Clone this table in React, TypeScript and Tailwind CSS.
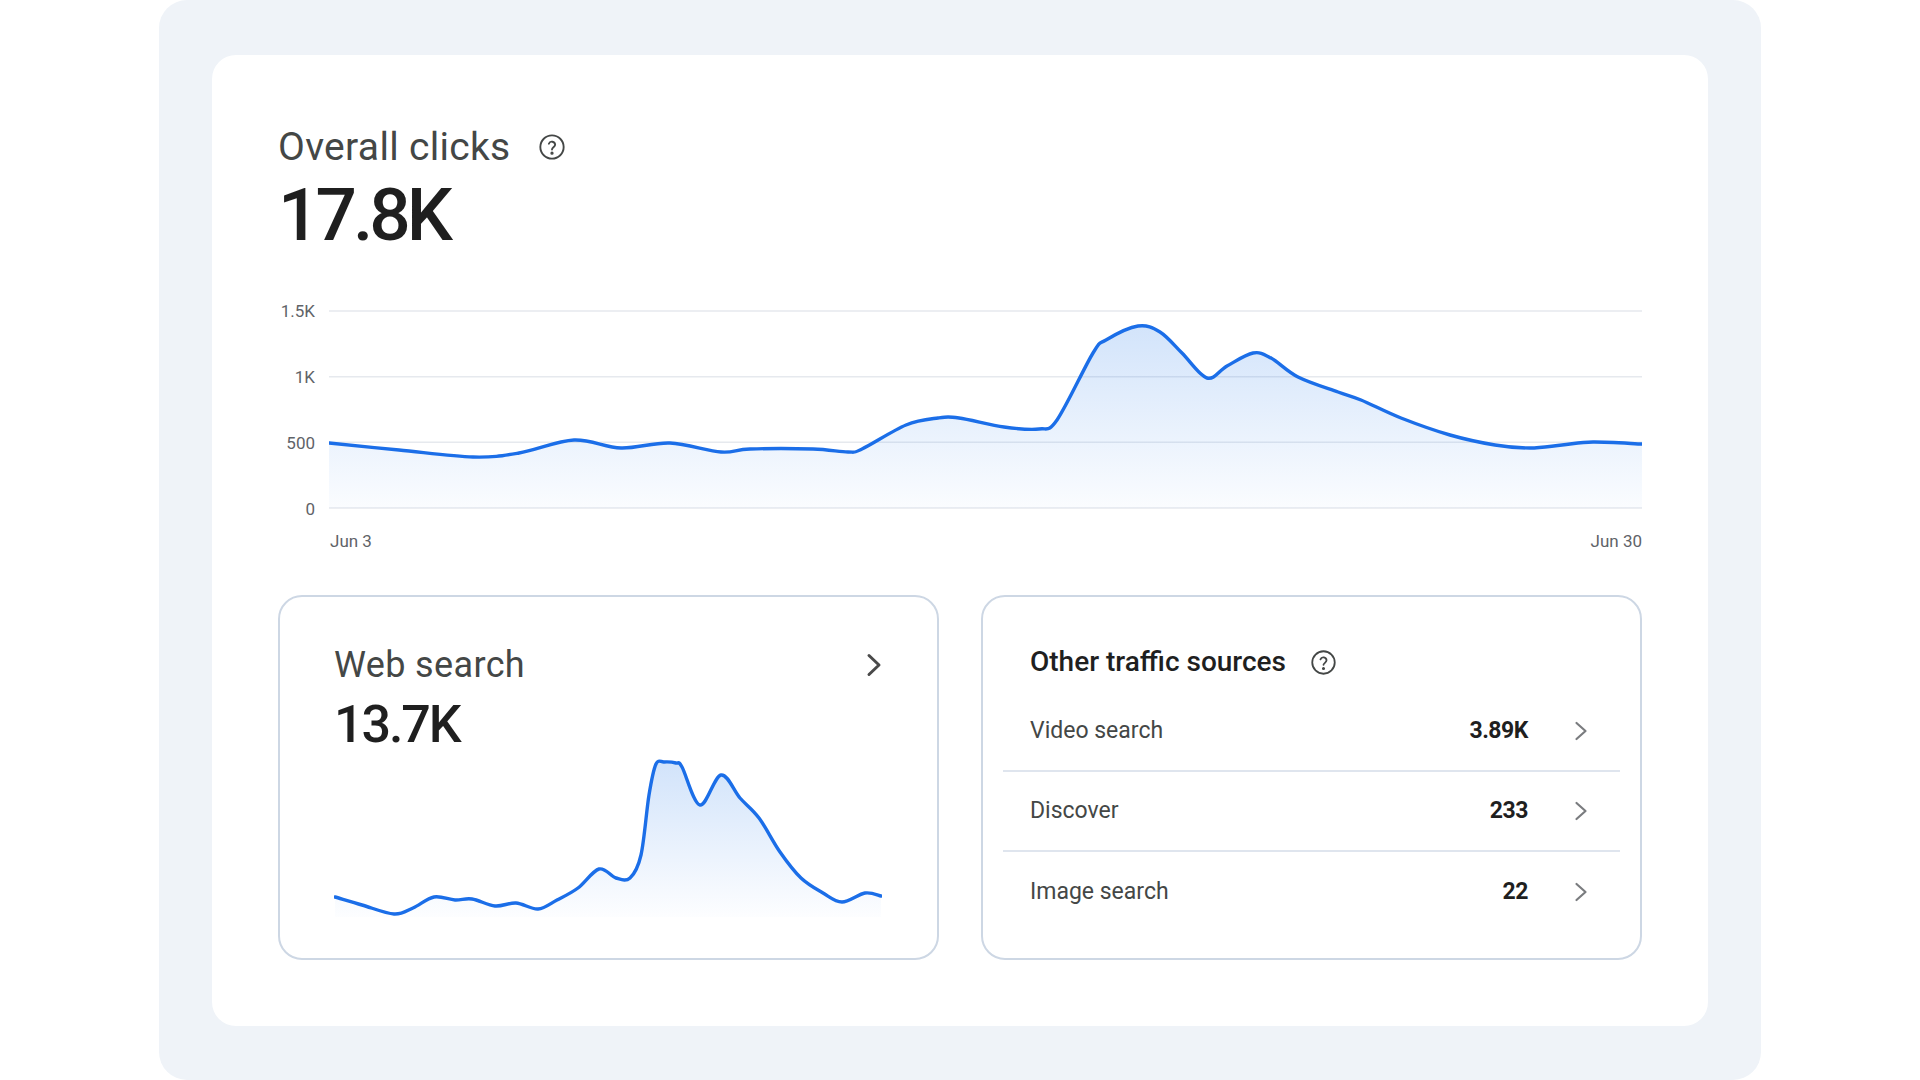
import React from "react";

type Pt = [number, number];

function smoothPath(pts: Pt[]): string {
  let d = `M${pts[0][0]},${pts[0][1]}`;
  for (let i = 0; i < pts.length - 1; i++) {
    const p0 = pts[i - 1] || pts[i];
    const p1 = pts[i];
    const p2 = pts[i + 1];
    const p3 = pts[i + 2] || p2;
    const c1x = p1[0] + (p2[0] - p0[0]) / 6;
    const c1y = p1[1] + (p2[1] - p0[1]) / 6;
    const c2x = p2[0] - (p3[0] - p1[0]) / 6;
    const c2y = p2[1] - (p3[1] - p1[1]) / 6;
    d += ` C${c1x.toFixed(1)},${c1y.toFixed(1)} ${c2x.toFixed(1)},${c2y.toFixed(1)} ${p2[0]},${p2[1]}`;
  }
  return d;
}

const mainRaw: Pt[] = [
  [330, 443], [400, 450], [474, 457], [520, 453], [575, 440], [622, 448], [671, 443],
  [722, 452], [751, 449], [814, 449], [849, 452], [863, 449], [907, 425], [939, 418],
  [960, 418], [1005, 427], [1040, 429], [1058, 420], [1094, 353], [1107, 340],
  [1139, 326], [1161, 332], [1183, 353], [1208, 378], [1228, 366], [1254, 353],
  [1272, 358], [1299, 377], [1339, 392], [1362, 400], [1402, 418], [1451, 435],
  [1496, 445], [1531, 448], [1563, 445], [1594, 442], [1643, 444],
];
const mainPts: Pt[] = mainRaw.map(([x, y]) => [x - 330, y - 300]);

const sparkPts: Pt[] = [
  [1, 142], [28, 150], [60, 159], [79, 153], [100, 142], [121, 145], [138, 144],
  [161, 151], [182, 148], [204, 154], [223, 145], [244, 133], [265, 114], [282, 123],
  [296, 123], [307, 100], [315, 40], [322, 9], [330, 7], [342, 8], [348, 12], [366, 50], [387, 20],
  [406, 43], [425, 63], [446, 97], [467, 123], [489, 138], [508, 147], [531, 138],
  [547, 141],
];

function HelpIcon({ size }: { size: number }) {
  return (
    <svg width={size} height={size} viewBox="0 0 24 24" fill="none" stroke="#444746" strokeWidth={1.6} strokeLinecap="round" strokeLinejoin="round">
      <circle cx="12" cy="12" r="10" />
      <path d="M9.3 9.2a2.8 2.8 0 0 1 5.4 0.9c0 1.9-2.7 2.4-2.7 4" />
      <circle cx="12" cy="17.3" r="0.6" fill="#444746" />
    </svg>
  );
}

function MainChart() {
  const w = 1313;
  const h = 220;
  const line = smoothPath(mainPts);
  const area = `${line} L${w},208 L0,208 Z`;
  const grid = [11, 76.7, 142.3, 208];
  return (
    <svg width={w} height={h} viewBox={`0 0 ${w} ${h}`} className="block">
      <defs>
        <linearGradient id="mainFill" x1="0" y1="20" x2="0" y2="208" gradientUnits="userSpaceOnUse">
          <stop offset="0" stopColor="#1a73e8" stopOpacity="0.2" />
          <stop offset="1" stopColor="#1a73e8" stopOpacity="0.02" />
        </linearGradient>
      </defs>
      {grid.map((y) => (
        <line key={y} x1="0" x2={w} y1={y} y2={y} stroke="#e6e9ee" strokeWidth="1.6" />
      ))}
      <path d={area} fill="url(#mainFill)" />
      <path d={line} fill="none" stroke="#1b6ee8" strokeWidth="3.4" strokeLinecap="round" strokeLinejoin="round" />
    </svg>
  );
}

function Sparkline() {
  const w = 548;
  const h = 165;
  const line = smoothPath(sparkPts);
  const area = `${line} L547,162 L1,162 Z`;
  return (
    <svg width={w} height={h} viewBox={`0 0 ${w} ${h}`} className="block">
      <defs>
        <linearGradient id="sparkFill" x1="0" y1="5" x2="0" y2="162" gradientUnits="userSpaceOnUse">
          <stop offset="0" stopColor="#1a73e8" stopOpacity="0.2" />
          <stop offset="1" stopColor="#1a73e8" stopOpacity="0.01" />
        </linearGradient>
      </defs>
      <path d={area} fill="url(#sparkFill)" />
      <path d={line} fill="none" stroke="#1b6ee8" strokeWidth="3.4" strokeLinecap="round" strokeLinejoin="round" />
    </svg>
  );
}

function BigChevron() {
  return (
    <svg width="16" height="24" viewBox="0 0 16 24" fill="none" stroke="#4a4a4a" strokeWidth="3" strokeLinecap="round" strokeLinejoin="round">
      <path d="M3 2.5 L13 12 L3 21.5" />
    </svg>
  );
}

function SmallChevron() {
  return (
    <svg width="14" height="20" viewBox="0 0 14 20" fill="none" stroke="#7a7c7f" strokeWidth="2.2" strokeLinecap="round" strokeLinejoin="round">
      <path d="M2.5 2 L11.5 10 L2.5 18" />
    </svg>
  );
}

const rows = [
  { label: "Video search", value: "3.89K" },
  { label: "Discover", value: "233" },
  { label: "Image search", value: "22" },
];

export default function App() {
  return (
    <div className="w-full h-[1080px] bg-white flex justify-center font-['Roboto','Liberation_Sans',sans-serif]">
      <div className="w-[1602px] h-[1080px] bg-[#eff3f8] rounded-[28px] pt-[55px] pb-[54px] px-[53px]">
        <div className="h-full bg-white rounded-[24px] px-[66px] pt-[69px] pb-[66px] flex flex-col">
          <div className="flex items-center h-[46px]">
            <span className="text-[39px] leading-[46px] tracking-[0.008em] text-[#444746]">Overall clicks</span>
            <span className="ml-[27px] flex items-center">
              <HelpIcon size={28} />
            </span>
          </div>
          <div className="mt-[8px] text-[73px] leading-[74px] font-medium tracking-[-0.055em] text-[#1f1f1f]">17.8K</div>

          <div className="mt-[48px] flex h-[220px]">
            <div className="w-[38px] h-[220px] flex flex-col justify-between items-end py-[1px] text-[17px] leading-[20px] text-[#5f6368]">
              <span>1.5K</span>
              <span>1K</span>
              <span>500</span>
              <span>0</span>
            </div>
            <div className="ml-[14px]">
              <MainChart />
            </div>
          </div>
          <div className="mt-[11px] pl-[52px] flex justify-between text-[17px] leading-[20px] text-[#5f6368]">
            <span>Jun 3</span>
            <span>Jun 30</span>
          </div>

          <div className="mt-[44px] grid grid-cols-2 gap-[42px] h-[365px]">
            <div className="border-2 border-[#cdd7e4] rounded-[24px] pt-[47px] pl-[54px] pr-[55px] flex flex-col">
              <div className="flex items-center justify-between h-[42px]">
                <span className="text-[36px] leading-[42px] tracking-[0.01em] text-[#444746]">Web search</span>
                <BigChevron />
              </div>
              <div className="mt-[13px] text-[52px] leading-[52px] font-medium tracking-[-0.04em] text-[#1f1f1f]">13.7K</div>
              <div className="mt-[4px]">
                <Sparkline />
              </div>
            </div>

            <div className="border-2 border-[#cdd7e4] rounded-[24px] pt-[48px] flex flex-col">
              <div className="pl-[47px] flex items-center h-[34px]">
                <span className="text-[28px] leading-[34px] font-medium text-[#1f1f1f]">Other traffic sources</span>
                <span className="ml-[24px] flex items-center">
                  <HelpIcon size={27} />
                </span>
              </div>
              <div className="mt-[13px] mx-[20px] flex flex-col">
                {rows.map((r, i) => (
                  <div
                    key={r.label}
                    className={
                      i < rows.length - 1
                        ? "h-[80px] flex items-center pl-[27px] pr-[32px] border-b-2 border-[#dfe5ee]"
                        : "h-[80px] flex items-center pl-[27px] pr-[32px]"
                    }
                  >
                    <span className="text-[23px] leading-[28px] text-[#444746]">{r.label}</span>
                    <span className="ml-auto text-[23px] leading-[28px] font-bold tracking-[-0.02em] text-[#1f1f1f]">{r.value}</span>
                    <span className="ml-[46px] flex items-center">
                      <SmallChevron />
                    </span>
                  </div>
                ))}
              </div>
            </div>
          </div>
        </div>
      </div>
    </div>
  );
}
